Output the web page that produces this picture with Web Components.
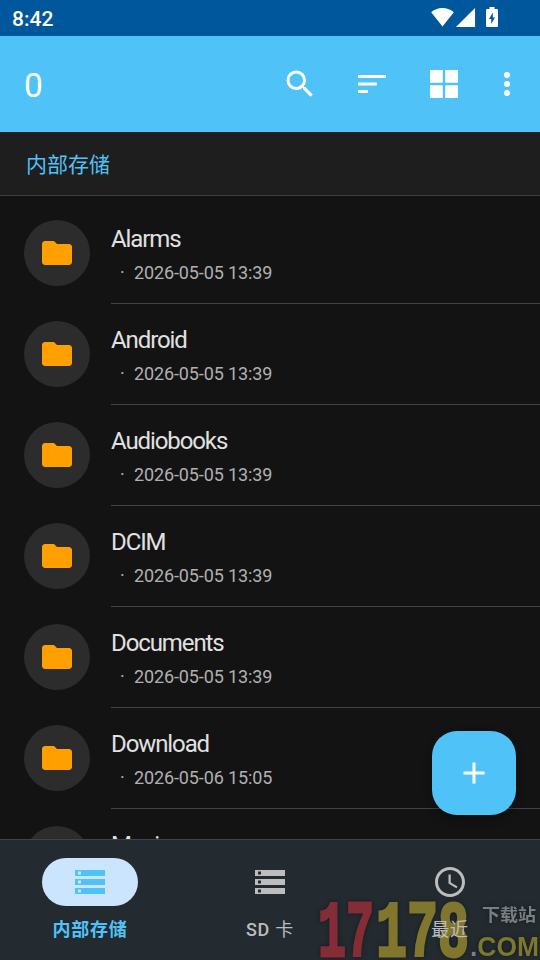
<!DOCTYPE html>
<html lang="zh-CN">
<head>
<meta charset="utf-8">
<title>内部存储</title>
<style>
html,body{margin:0;height:100%;background:#131313;font-family:Roboto,"Noto Sans CJK SC",sans-serif}
</style>
</head>
<body>
<file-app></file-app>
<script>
const ICONS={
search:'<path d="M15.5 14h-.79l-.28-.27A6.47 6.47 0 0 0 16 9.5 6.5 6.5 0 1 0 9.5 16c1.61 0 3.09-.59 4.23-1.57l.27.28v.79l5 4.99L20.49 19l-4.99-5zm-6 0C7.01 14 5 11.99 5 9.5S7.01 5 9.5 5 14 7.01 14 9.5 11.99 14 9.5 14z"/>',
sort:'<path d="M2.7 16h6.6v2H2.7zM2.7 6h18.6v2H2.7zM2.7 11h12.5v2H2.7z"/>',
grid:'<path d="M2.7 2.7h8.5v8.5H2.7zM12.8 2.7h8.5v8.5h-8.5zM2.7 12.8h8.5v8.5H2.7zM12.8 12.8h8.5v8.5h-8.5z"/>',
more:'<circle cx="12" cy="6" r="2"/><circle cx="12" cy="12" r="2"/><circle cx="12" cy="18" r="2"/>',
folder:'<path d="M10 4H4c-1.1 0-1.99.9-1.99 2L2 18c0 1.1.9 2 2 2h16c1.1 0 2-.9 2-2V8c0-1.1-.9-2-2-2h-8l-2-2z"/>',
storage:'<path d="M2 20h20v-4H2v4zm2-3h2v2H4v-2zM2 4v4h20V4H2zm4 3H4V5h2v2zm-4 7h20v-4H2v4zm2-3h2v2H4v-2z"/>',
clock:'<path d="M11.99 2C6.47 2 2 6.48 2 12s4.47 10 9.99 10C17.52 22 22 17.52 22 12S17.52 2 11.99 2zM12 20c-4.42 0-8-3.58-8-8s3.58-8 8-8 8 3.58 8 8-3.58 8-8 8zm.5-13H11v6l5.25 3.15.75-1.23-4.5-2.67z"/>',
plus:'<path d="M19 13h-6v6h-2v-6H5v-2h6V5h2v6h6v2z"/>',
wifi:'<path d="M12 21.500 0.200 6.400C3.200 3.800 7.300 2 12 2s8.800 1.800 11.800 4.400z"/>',
signal:'<path d="M2 22h20V2z"/>',
battery:'<path d="M16.700 4H14.500V2h-5v2H7.300C6.600 4 6 4.600 6 5.330v15.330C6 21.400 6.600 22 7.300 22h9.400c.7 0 1.300-.6 1.300-1.330V5.330C18 4.600 17.400 4 16.700 4zM11.200 19v-5H9L12.800 7.500v5H15L11.200 19z"/>'
};
function define(name,html,after){
  const t=document.createElement('template');t.innerHTML=html;
  customElements.define(name,class extends HTMLElement{
    constructor(){super();this.attachShadow({mode:'open'}).append(t.content.cloneNode(true));}
    connectedCallback(){after&&after(this,this.shadowRoot);}
  });
}
define('app-icon',`<style>:host{display:block;width:36px;height:36px;flex:none}svg{display:block;width:100%;height:100%;fill:currentColor}</style><svg viewBox="0 0 24 24"></svg>`,
 (h,r)=>r.querySelector('svg').innerHTML=ICONS[h.getAttribute('name')]||'');
define('status-bar',`<style>:host{display:flex;height:36px;box-sizing:border-box;background:#00579c;color:#fff;align-items:center;padding:0 36px 0 12px}
span{font:500 21px/36px Roboto,sans-serif;flex:1;padding-top:2px}
.wifi,.sig{width:23px;height:23px;margin-top:1px}.bat{width:24px;height:24px;margin-left:3px}
div{display:flex;align-items:center;margin-top:-2px}</style>
<span>8:42</span><div><app-icon class="wifi" name="wifi"></app-icon><app-icon class="sig" name="signal"></app-icon><app-icon class="bat" name="battery"></app-icon></div>`);
define('tool-bar',`<style>:host{display:flex;height:96px;background:#4fc2f8;color:#fff;align-items:center;padding:0 15px 0 24px}
slot{display:block;flex:1;font-size:33.5px;padding-top:3px}
app-icon{margin-right:36px}app-icon:last-child{margin-right:0}app-icon[name=grid]{margin-right:27px}</style>
<slot></slot><app-icon name="search"></app-icon><app-icon name="sort"></app-icon><app-icon name="grid"></app-icon><app-icon name="more"></app-icon>`);
define('path-bar',`<style>:host{display:block;height:63px;background:#1e1e1e;border-bottom:1px solid #3e3e3e;color:#4fc2f8;padding-left:26px;font-size:21px;line-height:66px}</style><slot></slot>`);
define('file-row',`<style>:host{display:flex;height:101px;padding-left:24px;gap:21px;box-sizing:border-box}
.c{width:66px;height:66px;border-radius:50%;background:#2c2c2c;color:#ffa000;display:flex;align-items:center;justify-content:center;margin-top:17px;flex:none}
.t{flex:1;border-bottom:1px solid #434343}
.n{font-size:24px;line-height:32px;margin-top:20px;color:#e1e1e1;letter-spacing:-1.1px}
.d{font-size:18px;line-height:24px;margin-top:6px;color:#b0b0b0;display:flex;letter-spacing:-.12px}
.d i{font-style:normal;width:14px;padding-left:9px}</style>
<div class="c"><app-icon name="folder"></app-icon></div><div class="t"><div class="n"><slot></slot></div><div class="d"><i>·</i><span></span></div></div>`,
 (h,r)=>r.querySelector('span').textContent=h.getAttribute('date'));
define('nav-item',`<style>:host{display:flex;flex:1;flex-direction:column;align-items:center;color:#bdbdbd;padding-top:18px;z-index:1}
.p{width:96px;height:48px;border-radius:24px;display:flex;align-items:center;justify-content:center}
:host([active]){color:#4fc2f8}:host([active]) .p{background:#cce5ff}:host([active]) .l{font-weight:700}
.l{font-size:18px;font-weight:500;line-height:24px;margin-top:12px;letter-spacing:.75px}
::slotted(span){font-weight:400}</style>
<div class="p"><app-icon></app-icon></div><div class="l"><slot></slot></div>`,
 (h,r)=>{const i=r.querySelector('app-icon');i.setAttribute('name',h.getAttribute('icon'));i.connectedCallback();});
define('nav-bar',`<style>:host{display:flex;height:121px;box-sizing:border-box;border-top:1px solid #3f4447;background:#232b30;position:relative}
::slotted(site-mark){position:absolute;right:0;bottom:0}</style><slot></slot>`);
define('add-button',`<style>:host{width:84px;height:84px;border-radius:25px;background:#4fc2f8;color:#fff;display:flex;align-items:center;justify-content:center;box-shadow:0 4px 10px #0005}</style><app-icon name="plus"></app-icon>`);
define('site-mark',`<style>:host{display:block;width:226px;height:64px;pointer-events:none}svg{display:block;overflow:hidden}
text{font-family:"Liberation Mono",monospace;font-weight:700;stroke-width:3}
.r{fill:#842d36;stroke:#842d36}.y{fill:#80762e;stroke:#80762e}
.s{fill:#7b7f82;font-family:"Noto Sans CJK SC",sans-serif;stroke:none}
.c{font-family:"Liberation Sans",sans-serif;fill:#7c782e;stroke:none}.c tspan{fill:#7b7f82}
g{filter:drop-shadow(0 0 2px #14181b)}</style>
<svg width="226" height="64" viewBox="314 896 226 64"><g>
<text class="r" x="318" y="956" font-size="80" textLength="56" lengthAdjust="spacingAndGlyphs">17</text>
<text class="y" x="376" y="956" font-size="80" textLength="93" lengthAdjust="spacingAndGlyphs">178</text>
<text class="s" x="482" y="921" font-size="17" textLength="54" lengthAdjust="spacingAndGlyphs">下载站</text>
<text class="c" x="470" y="956" font-size="27" textLength="69" lengthAdjust="spacingAndGlyphs"><tspan>.</tspan>COM</text></g></svg>`);
define('file-app',`<style>:host{display:flex;flex-direction:column;width:540px;height:960px;overflow:hidden;position:relative;background:#131313}
main{flex:1;min-height:0;overflow:hidden;padding-top:7px}
add-button{position:absolute;right:24px;bottom:145px}</style>
<status-bar></status-bar><tool-bar>0</tool-bar><path-bar>内部存储</path-bar>
<main><file-row date="2026-05-05 13:39">Alarms</file-row><file-row date="2026-05-05 13:39">Android</file-row><file-row date="2026-05-05 13:39">Audiobooks</file-row><file-row date="2026-05-05 13:39">DCIM</file-row><file-row date="2026-05-05 13:39">Documents</file-row><file-row date="2026-05-06 15:05">Download</file-row><file-row date="2026-05-05 13:39">Music</file-row></main>
<add-button></add-button>
<nav-bar><nav-item active icon="storage">内部存储</nav-item><nav-item icon="storage">SD <span>卡</span></nav-item><nav-item icon="clock"><span>最近</span></nav-item><site-mark></site-mark></nav-bar>`);
</script>
</body>
</html>
